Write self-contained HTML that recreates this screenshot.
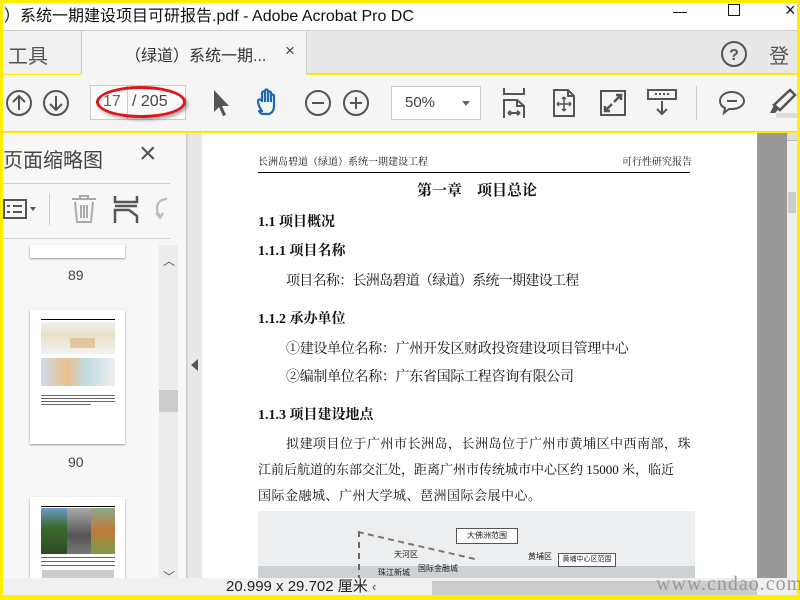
<!DOCTYPE html>
<html><head><meta charset="utf-8">
<style>
*{margin:0;padding:0;box-sizing:border-box}
body{width:800px;height:600px;overflow:hidden;background:#ffef00;font-family:"Liberation Sans","Noto Sans CJK SC",sans-serif;position:relative}
.a{position:absolute}
.ser{font-family:"Liberation Serif","Noto Serif CJK SC",serif;color:#111;white-space:nowrap}
.ico{position:absolute}
</style></head><body>
<div class="a" style="left:3px;top:3px;width:794px;height:27px;background:#fff"></div>
<div class="a" style="left:4px;top:2px;font-size:16px;color:#111;white-space:nowrap">）系统一期建设项目可研报告.pdf - Adobe Acrobat Pro DC</div>
<div class="a" style="left:673px;top:12px;width:14px;height:1px;background:#111"></div>
<div class="a" style="left:728px;top:4px;width:12px;height:12px;border:1px solid #111"></div>
<div class="a" style="left:785px;top:0px;font-size:18px;color:#111">×</div>
<div class="a" style="left:3px;top:30px;width:794px;height:44px;background:#e8e8e8;border-top:1px solid #ccc;border-bottom:1px solid #d0d0d0"></div>
<div class="a" style="left:3px;top:31px;width:79px;height:43px;background:#f0f0f0;border-right:1px solid #ccc"></div>
<div class="a" style="left:8px;top:40px;font-size:20px;color:#555">工具</div>
<div class="a" style="left:82px;top:31px;width:225px;height:44px;background:#f5f5f5;border-right:1px solid #ccc"></div>
<div class="a" style="left:125px;top:42px;font-size:16px;color:#333">（绿道）系统一期...</div>
<div class="a" style="left:285px;top:41px;font-size:17px;color:#444">×</div>
<svg class="ico" style="left:720px;top:40px" width="28" height="28"><circle cx="14" cy="14" r="12" fill="none" stroke="#555" stroke-width="2"/><text x="14" y="20" font-size="16" font-weight="bold" text-anchor="middle" fill="#555" font-family="Liberation Sans">?</text></svg>
<div class="a" style="left:769px;top:40px;font-size:20px;color:#555">登录</div>
<div class="a" style="left:3px;top:75px;width:794px;height:57px;background:#f5f5f5;border-bottom:1px solid #ccc"></div>
<svg class="ico" style="left:5px;top:89px" width="28" height="28"><circle cx="14" cy="14" r="12" fill="none" stroke="#555" stroke-width="2"/><path d="M14 21V7M8 13l6-6 6 6" fill="none" stroke="#555" stroke-width="2"/></svg>
<svg class="ico" style="left:42px;top:89px" width="28" height="28"><circle cx="14" cy="14" r="12" fill="none" stroke="#555" stroke-width="2"/><path d="M14 7v14M8 15l6 6 6-6" fill="none" stroke="#555" stroke-width="2"/></svg>
<div class="a" style="left:90px;top:85px;width:96px;height:35px;border:1px solid #ccc;background:#fafafa"></div>
<div class="a" style="left:127px;top:86px;width:1px;height:33px;background:#ccc"></div>
<div class="a" style="left:103px;top:93px;font-size:16px;color:#666">17</div>
<div class="a" style="left:132px;top:93px;font-size:16px;color:#444">/ 205</div>
<div class="a" style="left:96px;top:86px;width:90px;height:32px;border:3px solid #e0141a;border-radius:50%;box-shadow:2px 2px 3px rgba(0,0,0,.35)"></div>
<svg class="ico" style="left:210px;top:88px" width="24" height="30"><path d="M4 2L4 24L9 19L13 28L16 27L12 18L19 18Z" fill="#555"/></svg>
<svg class="ico" style="left:254px;top:87px" width="30" height="32"><path d="M8 24C5 20 4 16 4 14c0-2 3-2 4 0V6c0-2 3-2 3 0V4c0-2 3-2 3 0v2c0-2 3-2 3 0v3c0-2 3-2 3 0v10c0 4-2 7-5 8h-6c-2 0-3-1-4-3z M11 6v9M14 4v11M17 6v9" fill="none" stroke="#1f67b9" stroke-width="2.2" stroke-linejoin="round"/></svg>
<svg class="ico" style="left:304px;top:89px" width="28" height="28"><circle cx="14" cy="14" r="12" fill="none" stroke="#555" stroke-width="2"/><path d="M8 14h12" stroke="#555" stroke-width="2"/></svg>
<svg class="ico" style="left:342px;top:89px" width="28" height="28"><circle cx="14" cy="14" r="12" fill="none" stroke="#555" stroke-width="2"/><path d="M8 14h12M14 8v12" stroke="#555" stroke-width="2"/></svg>
<div class="a" style="left:391px;top:86px;width:90px;height:34px;border:1px solid #ccc;background:#fff"></div>
<div class="a" style="left:405px;top:94px;font-size:15px;color:#444">50%</div>
<div class="a" style="left:462px;top:101px;width:0;height:0;border-left:4px solid transparent;border-right:4px solid transparent;border-top:5px solid #666"></div>
<svg class="ico" style="left:502px;top:88px" width="24" height="32"><path d="M2 0v6h20V0M2 30V12h13l7 6v12M15 12v6h7M6 25h12M6 25l3-2M6 25l3 2M18 25l-3-2M18 25l-3 2" fill="none" stroke="#555" stroke-width="2"/></svg>
<svg class="ico" style="left:551px;top:88px" width="26" height="30"><path d="M3 2h14l6 6v20H3z M17 2v6h6" fill="none" stroke="#555" stroke-width="2"/><path d="M13 9v14M6 16h14M13 9l-2 2M13 9l2 2M13 23l-2-2M13 23l2-2M6 16l2-2M6 16l2 2M20 16l-2-2M20 16l-2 2" stroke="#555" stroke-width="1.5" fill="none"/></svg>
<svg class="ico" style="left:600px;top:89px" width="26" height="28"><rect x="1" y="2" width="24" height="24" fill="none" stroke="#555" stroke-width="2"/><path d="M14 13l7-7M16 6h5v5M12 15l-7 7M5 17v5h5" fill="none" stroke="#555" stroke-width="2.5"/></svg>
<svg class="ico" style="left:647px;top:89px" width="30" height="28"><rect x="1" y="1" width="28" height="9" fill="none" stroke="#555" stroke-width="2"/><path d="M15 12v13M10 20l5 5 5-5" fill="none" stroke="#555" stroke-width="2"/><path d="M8 5h2M12 5h2M16 5h2M20 5h2" stroke="#555" stroke-width="2"/></svg>
<div class="a" style="left:696px;top:86px;width:1px;height:34px;background:#ccc"></div>
<svg class="ico" style="left:717px;top:89px" width="30" height="28"><path d="M15 3C8 3 3 7 3 12c0 3 2 6 5 7l-1 5 5-4h3c7 0 12-4 12-8s-5-9-12-9z" fill="none" stroke="#555" stroke-width="2"/><path d="M10 12h10" stroke="#555" stroke-width="2"/></svg>
<svg class="ico" style="left:764px;top:87px" width="33" height="32"><path d="M26 3l5 5-15 15-6-5z" fill="none" stroke="#555" stroke-width="2.5"/><path d="M10 18l-4 8h5l4-4" fill="#555"/><rect x="12" y="26" width="21" height="5" fill="#ddd"/></svg>
<div class="a" style="left:3px;top:133px;width:184px;height:445px;background:#f7f7f7;border-right:1px solid #ccc"></div>
<div class="a" style="left:3px;top:144px;font-size:20px;color:#444">页面缩略图</div>
<div class="a" style="left:139px;top:137px;font-size:30px;color:#555;font-weight:300">×</div>
<div class="a" style="left:3px;top:183px;width:167px;height:1px;background:#d0d0d0"></div>
<svg class="ico" style="left:3px;top:197px" width="36" height="24"><rect x="1" y="3" width="22" height="18" fill="none" stroke="#555" stroke-width="2"/><path d="M4 9h3M10 9h9M4 15h3M10 15h9" stroke="#555" stroke-width="2"/><path d="M27 10l3 4 3-4z" fill="#555"/></svg>
<div class="a" style="left:49px;top:193px;width:1px;height:32px;background:#ccc"></div>
<svg class="ico" style="left:70px;top:194px" width="28" height="30"><path d="M2 5h24M10 5V2h8v3M5 8l2 20h14l2-20M11 11v13M14 11v13M17 11v13" fill="none" stroke="#aaa" stroke-width="2"/></svg>
<svg class="ico" style="left:113px;top:195px" width="26" height="30"><path d="M2 1v6h22V1M2 28V15h14l8 6v7M2 11h22" fill="none" stroke="#555" stroke-width="2.5"/></svg>
<svg class="ico" style="left:150px;top:196px" width="20" height="28"><path d="M17 3c-6 0-10 4-10 9 0 3 1 6 3 8M6 17l4 5 3-5" fill="none" stroke="#bbb" stroke-width="2.2"/></svg>
<div class="a" style="left:3px;top:238px;width:167px;height:1px;background:#d0d0d0"></div>
<div class="a" style="left:30px;top:245px;width:95px;height:13px;background:#fff;box-shadow:0 1px 2px #999"></div>
<div class="a" style="left:68px;top:267px;font-size:14px;color:#444">89</div>
<div class="a" style="left:30px;top:310px;width:95px;height:134px;background:#fff;box-shadow:0 1px 2px #999">
 <div class="a" style="left:11px;top:9px;width:74px;height:1px;background:#000"></div>
 <div class="a" style="left:11px;top:12px;width:74px;height:32px;background:linear-gradient(#eee,#e8e0c8 40%,#f2f2f2)"></div>
 <div class="a" style="left:40px;top:28px;width:25px;height:10px;background:#d9b07a;opacity:.6"></div>
 <div class="a" style="left:11px;top:48px;width:74px;height:28px;background:linear-gradient(90deg,#cde,#e9c08a 35%,#bfdbe0 60%,#eee)"></div>
 <div class="a" style="left:11px;top:85px;width:74px;height:1px;background:#666"></div>
 <div class="a" style="left:11px;top:88px;width:74px;height:1px;background:#666"></div>
 <div class="a" style="left:11px;top:91px;width:74px;height:1px;background:#666"></div>
 <div class="a" style="left:11px;top:94px;width:50px;height:1px;background:#666"></div>
</div>
<div class="a" style="left:68px;top:454px;font-size:14px;color:#444">90</div>
<div class="a" style="left:30px;top:497px;width:95px;height:82px;background:#fff;box-shadow:0 1px 2px #999">
 <div class="a" style="left:11px;top:9px;width:74px;height:1px;background:#000"></div>
 <div class="a" style="left:11px;top:11px;width:26px;height:46px;background:linear-gradient(#6b9bc9,#3a6b2e 40%,#2f4a28)"></div>
 <div class="a" style="left:37px;top:11px;width:24px;height:46px;background:linear-gradient(#aaa,#555 60%,#777)"></div>
 <div class="a" style="left:61px;top:11px;width:24px;height:46px;background:linear-gradient(#8a8,#c07a3a 50%,#7a9a4a)"></div>
 <div class="a" style="left:11px;top:60px;width:74px;height:1px;background:#666"></div>
 <div class="a" style="left:11px;top:64px;width:74px;height:1px;background:#666"></div>
 <div class="a" style="left:11px;top:68px;width:74px;height:1px;background:#666"></div>
 <div class="a" style="left:12px;top:73px;width:72px;height:9px;background:#ccc"></div>
</div>
<div class="a" style="left:159px;top:245px;width:19px;height:333px;background:#ececec"></div>
<div class="a" style="left:159px;top:390px;width:19px;height:22px;background:#ccc"></div>
<div class="a" style="left:163px;top:252px;font-size:12px;color:#555">︿</div>
<div class="a" style="left:163px;top:568px;font-size:12px;color:#555">﹀</div>
<div class="a" style="left:188px;top:133px;width:14px;height:445px;background:#e8e8e8"></div>
<div class="a" style="left:191px;top:359px;width:0;height:0;border-top:6px solid transparent;border-bottom:6px solid transparent;border-right:7px solid #555"></div>
<div class="a" style="left:202px;top:133px;width:555px;height:445px;background:#fff;overflow:hidden">
 <div class="a ser" style="left:56px;top:20px;font-size:10px">长洲岛碧道（绿道）系统一期建设工程</div>
 <div class="a ser" style="left:420px;top:20px;font-size:10px">可行性研究报告</div>
 <div class="a" style="left:56px;top:39px;width:432px;height:1px;background:#000"></div>
 <div class="a ser" style="left:215px;top:46px;font-size:15px;font-weight:bold">第一章　项目总论</div>
 <div class="a ser" style="left:56px;top:78px;font-size:14px;font-weight:bold">1.1 项目概况</div>
 <div class="a ser" style="left:56px;top:107px;font-size:14px;font-weight:bold">1.1.1 项目名称</div>
 <div class="a ser" style="left:84px;top:137px;font-size:14px;letter-spacing:-.7px">项目名称：长洲岛碧道（绿道）系统一期建设工程</div>
 <div class="a ser" style="left:56px;top:175px;font-size:14px;font-weight:bold">1.1.2 承办单位</div>
 <div class="a ser" style="left:84px;top:205px;font-size:14px;letter-spacing:-.3px">①建设单位名称：广州开发区财政投资建设项目管理中心</div>
 <div class="a ser" style="left:84px;top:233px;font-size:14px;letter-spacing:-.3px">②编制单位名称：广东省国际工程咨询有限公司</div>
 <div class="a ser" style="left:56px;top:271px;font-size:14px;font-weight:bold">1.1.3 项目建设地点</div>
 <div class="a ser" style="left:84px;top:300px;font-size:13px;letter-spacing:.5px">拟建项目位于广州市长洲岛，长洲岛位于广州市黄埔区中西南部，珠</div>
 <div class="a ser" style="left:56px;top:326px;font-size:13px;letter-spacing:0px">江前后航道的东部交汇处，距离广州市传统城市中心区约 15000 米，临近</div>
 <div class="a ser" style="left:56px;top:352px;font-size:13px;letter-spacing:.5px">国际金融城、广州大学城、琶洲国际会展中心。</div>
 <div class="a" style="left:56px;top:378px;width:437px;height:70px;background:#eceeef">
  <div class="a" style="left:0;top:55px;width:437px;height:15px;background:#ccd1d4"></div>
  <div class="a" style="left:100px;top:20px;width:2px;height:50px;border-left:2px dashed #666"></div>
  <div class="a" style="left:100px;top:20px;width:120px;height:2px;border-top:2px dashed #777;transform:rotate(13deg);transform-origin:0 0"></div>
  <div class="a" style="left:198px;top:17px;width:62px;height:16px;background:#fff;border:1px solid #555;font-size:8px;color:#222;text-align:center;line-height:14px">大佛洲范围</div>
  <div class="a" style="left:136px;top:38px;font-size:8px;color:#222">天河区</div>
  <div class="a" style="left:270px;top:40px;font-size:8px;color:#222">黄埔区</div>
  <div class="a" style="left:300px;top:42px;width:58px;height:14px;background:#fff;border:1px solid #555;font-size:7px;color:#222;text-align:center;line-height:12px">黄埔中心区范围</div>
  <div class="a" style="left:120px;top:56px;font-size:8px;color:#222">珠江新城</div>
  <div class="a" style="left:160px;top:52px;font-size:8px;color:#222">国际金融城</div>
 </div>
</div>
<div class="a" style="left:757px;top:133px;width:30px;height:445px;background:#999"></div>
<div class="a" style="left:787px;top:133px;width:10px;height:445px;background:#eee"></div>
<div class="a" style="left:787px;top:133px;width:10px;height:8px;background:#ddd;border-bottom:1px solid #bbb"></div>
<div class="a" style="left:788px;top:192px;width:8px;height:21px;background:#ccc"></div>
<div class="a" style="left:3px;top:578px;width:794px;height:17px;background:#f0f0f0"></div>
<div class="a" style="left:226px;top:578px;font-size:15px;color:#222;line-height:18px;white-space:nowrap">20.999 x 29.702 厘米</div>
<div class="a" style="left:372px;top:578px;width:10px;font-size:13px;color:#444;line-height:18px">‹</div>
<div class="a" style="left:432px;top:581px;width:325px;height:14px;background:#ccc"></div>
<div class="a" style="left:656px;top:573px;font-size:20px;color:#999;font-family:'Liberation Serif',serif;letter-spacing:1px;white-space:nowrap">www.cndao.com</div>
</body></html>
